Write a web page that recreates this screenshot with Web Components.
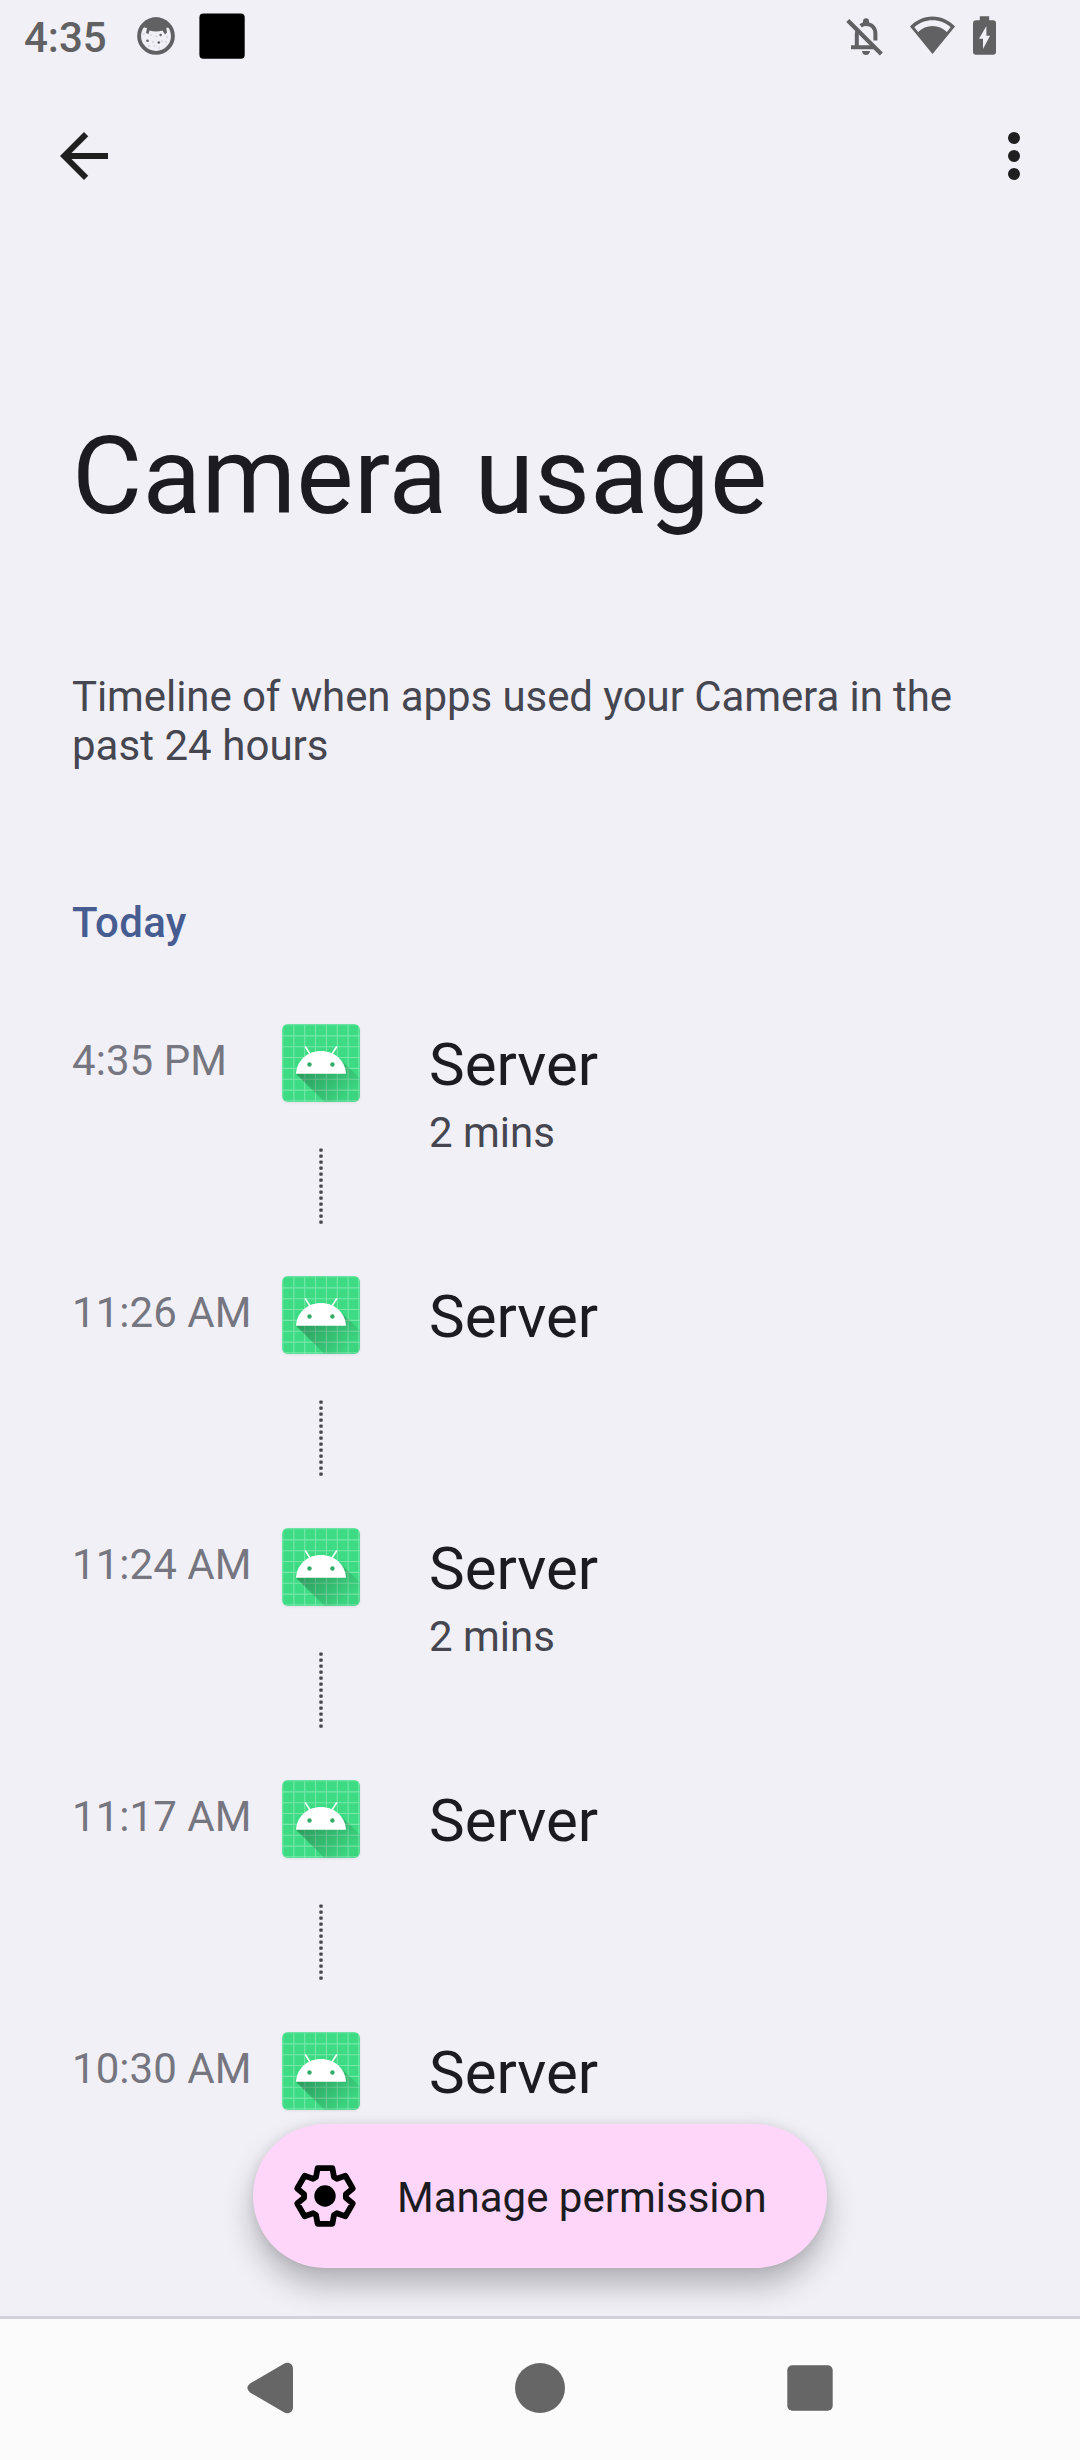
<!DOCTYPE html>
<html lang="en">
<head>
<meta charset="utf-8">
<title>Camera usage</title>
<style>
html,body{margin:0;padding:0}
body{width:1080px;height:2460px;overflow:hidden;background:#f1f0f7;font-family:Roboto,"Liberation Sans",sans-serif}
</style>
</head>
<body>
<usage-screen></usage-screen>
<script>
const define = (name, css, html) => customElements.define(name, class extends HTMLElement {
  constructor() {
    super();
    this.attachShadow({ mode: 'open' }).innerHTML =
      `<style>:host{display:block;box-sizing:border-box}*{box-sizing:border-box}svg{display:block;flex:none}${css}</style>` +
      (typeof html === 'function' ? html(this) : html);
  }
});

define('status-bar', `
:host{display:flex;height:72px;padding:0 80px 0 24px;color:#616163;align-items:flex-start}
.clock{font-size:42px;font-weight:500;line-height:49px;margin-top:13px;width:110px;white-space:nowrap}
.gap{flex:1}`,
`<span class="clock">4:35</span>
<svg width="44" height="72" viewBox="134 0 44 72"><circle cx="156" cy="36" r="16.900" fill="none" stroke="currentColor" stroke-width="3.900"/>
<path d="M142 27Q147 17.500 156 17.500T170 27L166.300 28 167 32.500 165 34.500 162.500 30.500Q156 32.500 149.500 30.500L148.500 34 146 33 147 28Z" fill="currentColor"/>
<g fill="currentColor"><circle cx="147.500" cy="40.700" r="1.300"/><circle cx="158.800" cy="42.500" r="1.300"/><circle cx="160.600" cy="35" r="1.200"/>
<g opacity=".3"><circle cx="144" cy="34" r=".8"/><circle cx="151" cy="35" r=".8"/><circle cx="156.500" cy="36.500" r=".8"/><circle cx="153" cy="42" r=".8"/><circle cx="162" cy="41" r=".8"/><circle cx="166" cy="42" r=".8"/><circle cx="149" cy="46" r=".8"/><circle cx="154.500" cy="46" r=".8"/><circle cx="159" cy="48" r=".8"/><circle cx="167" cy="37" r=".8"/></g></g></svg>
<svg width="70" height="72" viewBox="178 0 70 72"><rect x="199.400" y="13.400" width="45.300" height="45.300" rx="4" fill="#000"/></svg>
<span class="gap"></span>
<svg width="180" height="72" viewBox="820 0 180 72" fill="none" stroke="currentColor">
<path d="M847.800 20.500 881.300 53.900" stroke-width="4.200"/>
<path d="M851 47.200H874M856.800 47V34Q856.800 31.500 858 29.500M860.700 25.800Q863 24 866 24C872 24 875.400 28.300 875.400 34V40.500" stroke-width="4"/>
<path d="M863 24V21.200a3 3 0 0 1 6 0V24ZM862 51H870Q869.500 54.900 866 54.900T862 51Z" fill="currentColor" stroke="none"/>
<path d="M932.500 54 910 26.500C916 20.500 923.500 16.600 932.500 16.600S949 20.500 955 26.500ZM918.100 32C922 28.300 927 26 932.500 26S943 28.300 946.900 32L950.600 27.200C945.500 22.800 939.500 20.300 932.500 20.300S919.500 22.800 914.400 27.200Z" fill="currentColor" fill-rule="evenodd" stroke="none"/>
<path d="M979.800 16.200H989.200V20.200H993Q996 20.200 996 23.200V51.800Q996 54.800 993 54.800H976Q973 54.800 973 51.800V23.200Q973 20.200 976 20.200H979.800ZM986.400 26 979 38.800H983V49L990 35.800H986.400Z" fill="currentColor" fill-rule="evenodd" stroke="none"/>
</svg>`);

define('top-app-bar', `
:host{display:flex;justify-content:space-between;align-items:center;height:168px;padding:0 30px 0 48px;color:#1f1f1f}`,
`<svg width="72" height="72" viewBox="0 0 24 24"><path fill="currentColor" d="M20 11H7.830l5.590-5.590L12 4l-8 8 8 8 1.410-1.410L7.830 13H20z"/></svg>
<svg width="72" height="72" viewBox="0 0 24 24" fill="currentColor"><circle cx="12" cy="6" r="2"/><circle cx="12" cy="12" r="2"/><circle cx="12" cy="18" r="2"/></svg>`);

define('page-title', `
:host{padding:173px 72px 0;height:432px}
h1{margin:0;font-weight:400;font-size:108px;line-height:126px;letter-spacing:.2px;color:#1b1b21;white-space:nowrap}`, `<h1><slot></slot></h1>`);

define('summary-text', `
:host{width:1080px;height:192px;padding:0 72px;font-size:42px;line-height:49px;color:#45464f}
p{margin:0;letter-spacing:.04px}
p::first-line{letter-spacing:-.085px}`, `<p><slot></slot></p>`);

define('day-header', `
:host{padding:34px 72px 0;height:148px;font-size:42px;line-height:49px;font-weight:500;letter-spacing:.3px;color:#475d92}`, `<slot></slot>`);

const lines = [0.8, 11.9, 22.7, 33.5, 44.4, 55.3, 66.1, 76.9];
define('app-icon', `:host{width:78px;height:78px;border-radius:6px;box-shadow:0 1px 3px rgba(0,0,0,.08)}`,
`<svg width="78" height="78" viewBox="0 0 78 78"><defs><linearGradient id="s" gradientUnits="userSpaceOnUse" x1="30" y1="42" x2="62" y2="76"><stop stop-opacity=".27"/><stop offset="1" stop-opacity=".03"/></linearGradient><clipPath id="c"><rect width="78" height="78" rx="6"/></clipPath></defs>
<g clip-path="url(#c)"><rect width="78" height="78" fill="#3ddc84"/>
<path d="${lines.map(v => `M${v} 0V78M0 ${v}H78`).join('')}" stroke="#fff" stroke-opacity=".3" stroke-width="1.100"/>
<path d="M14 49.700 43 78.500H78V54.500L60 37Z" fill="url(#s)"/></g>
<path d="M23.200 22.500 29 31.500M54.800 22.500 49 31.500" stroke="#fff" stroke-width="1.500"/>
<path d="M14 49.700C15 36 26 27 39 27S63 36 64 49.700Z" fill="#fff"/>
<circle cx="27.500" cy="40.500" r="2.200" fill="#30ad68"/><circle cx="50.400" cy="40.500" r="2.200" fill="#30ad68"/></svg>`);

define('usage-entry', `
:host{display:flex;height:252px;padding-left:72px;align-items:flex-start}
time{width:210px;font-size:42px;line-height:49px;margin-top:24px;letter-spacing:.06px;color:#767680;white-space:nowrap}
.track{display:flex;flex-direction:column;align-items:center;width:78px;margin-top:12px}
.dots{margin-top:46px}
.app{margin-left:69px;margin-top:17px}
.name{font-size:60px;line-height:71px;color:#1b1b21}
.dur{font-size:42px;line-height:49px;color:#45464f;margin-top:8px}`,
el => `<time>${el.getAttribute('time')}</time>
<div class="track"><app-icon></app-icon>${el.hasAttribute('last') ? '' :
`<svg class="dots" width="6" height="78" viewBox="0 0 6 78"><g fill="#46464f">${Array.from({length: 13}, (_, i) => `<rect x="1.300" y="${(0.4 + i * 6).toFixed(1)}" width="3.400" height="3.400" rx=".7"/>`).join('')}</g></svg>`}</div>
<div class="app"><div class="name"><slot></slot></div>${el.hasAttribute('duration') ? `<div class="dur">${el.getAttribute('duration')}</div>` : ''}</div>`);

/* The cog outline is one tooth repeated every 60 degrees. */
const tooth = [[-9, -18.9], [-7.4, -27.8], [7.4, -27.8], [9, -18.9]];
const cog = Array.from({ length: 6 }, (_, k) => tooth.map(([x, y]) => {
  const a = k * Math.PI / 3;
  return (36 + x * Math.cos(a) - y * Math.sin(a)).toFixed(2) + ' ' + (36 + x * Math.sin(a) + y * Math.cos(a)).toFixed(2);
}).join('L')).join('L');
define('extended-fab', `
:host{display:flex;align-items:center;position:absolute;left:253px;top:2124px;width:574px;height:144px;padding-left:36px;border-radius:72px;background:#fdd6f9;color:#1b1b21;
box-shadow:0 18px 30px rgba(0,0,0,.25),0 0 12px rgba(0,0,0,.09)}
span{font-size:42px;line-height:49px;margin-left:36px;margin-top:3px;white-space:nowrap}`,
`<svg width="72" height="72" viewBox="0 0 72 72"><path d="M${cog}Z" fill="none" stroke="#000" stroke-width="5.800" stroke-linejoin="round"/><circle cx="36" cy="36" r="10.700"/></svg><span><slot></slot></span>`);

define('navigation-bar', `
:host{display:flex;position:relative;z-index:2;justify-content:center;align-items:center;gap:198px;height:144px;padding-bottom:3px;border-top:3px solid #d2d1da;background:#fbfbfb;color:#666;flex:none}`,
`<svg width="72" height="72" viewBox="0 0 72 72"><path d="M16 31.500 49.500 12C53.500 9.300 59 11 59 17V55C59 61 53.500 62.700 49.500 60L16 40.500Q10.700 36 16 31.500Z" fill="currentColor"/></svg>
<svg width="72" height="72" viewBox="0 0 72 72"><circle cx="36" cy="36" r="25" fill="currentColor"/></svg>
<svg width="72" height="72" viewBox="0 0 72 72"><rect x="13.300" y="13.300" width="45.400" height="45.400" rx="5" fill="currentColor"/></svg>`);

define('usage-screen', `
:host{position:relative;width:1080px;height:2460px;overflow:hidden;display:flex;flex-direction:column;background:#f1f0f7}
main{flex:1;min-height:0;overflow:hidden}`,
`<status-bar></status-bar>
<main><top-app-bar></top-app-bar>
<page-title>Camera usage</page-title>
<summary-text>Timeline of when apps used your Camera in the past 24 hours</summary-text>
<day-header>Today</day-header>
<section>
<usage-entry time="4:35 PM" duration="2 mins">Server</usage-entry>
<usage-entry time="11:26 AM">Server</usage-entry>
<usage-entry time="11:24 AM" duration="2 mins">Server</usage-entry>
<usage-entry time="11:17 AM">Server</usage-entry>
<usage-entry time="10:30 AM" last>Server</usage-entry>
</section></main>
<extended-fab>Manage permission</extended-fab>
<navigation-bar></navigation-bar>`);
</script>
</body>
</html>
